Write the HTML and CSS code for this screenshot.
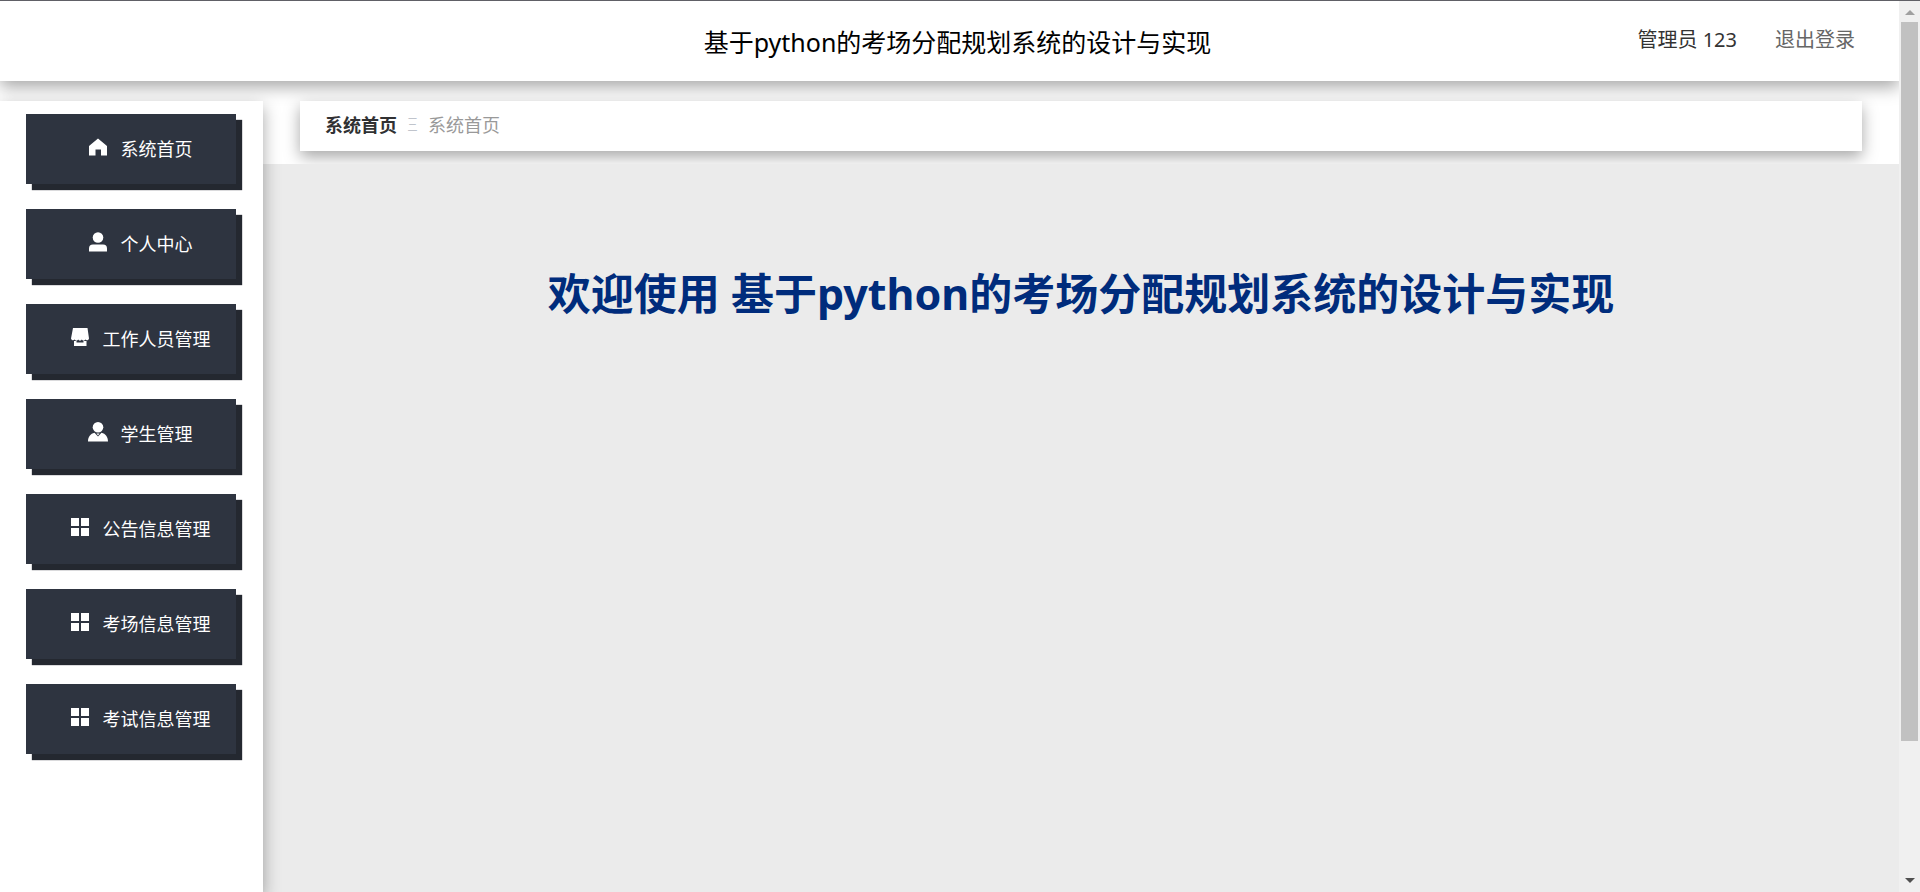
FILE: index.html
```html
<!DOCTYPE html>
<html lang="zh-CN">

<head>
    <meta charset="UTF-8">
    <meta name="viewport" content="width=device-width, initial-scale=1.0">
    <title>基于python的考场分配规划系统的设计与实现</title>
    <link rel="stylesheet" href="styles.css">
</head>

<body>
    <svg class="sprite" aria-hidden="true">
        <symbol id="icon-home" viewBox="0 0 20 20">
            <path d="M10 1.5 19 9V18.5H13V12.500H7.500V18.5H1V9Z"/>
        </symbol>
        <symbol id="icon-user" viewBox="0 0 20 20">
            <circle cx="10" cy="5.5" r="5.3"/>
            <path d="M1 19.5v-3a4 4 0 0 1 4-4h10a4 4 0 0 1 4 4v3z"/>
        </symbol>
        <symbol id="icon-shop" viewBox="0 0 20 20">
            <path d="M3 1h14.5L19 11.5a2 2 0 0 1-3.6 1 2 2 0 0 1-3.6 0 2 2 0 0 1-3.6 0 2 2 0 0 1-3.6 0 2 2 0 0 1-3.6-1z"/>
            <path d="M4 14h2.5v1.5h7V14h3v5H4z"/>
        </symbol>
        <symbol id="icon-custom" viewBox="0 0 20 20">
            <circle cx="10" cy="5.3" r="5.3"/>
            <path d="M0 19.5C0 15 2.5 11.5 6.5 10.8L10 14.5 13.5 10.8C17.5 11.5 20 15 20 19.5z"/>
            <path d="M8.500 11.5h3L10 13.5z"/>
        </symbol>
        <symbol id="icon-menu" viewBox="0 0 20 20">
            <path d="M1 1h8v8H1zM11 1h8v8h-8zM1 11h8v8H1zM11 11h8v8h-8z"/>
        </symbol>
    </svg>

    <div class="app">
        <div class="page">
            <header class="navbar">
                <h1 class="title">基于python的考场分配规划系统的设计与实现</h1>
                <div class="user">
                    <span class="user-name">管理员 123</span>
                    <a class="logout" href="#">退出登录</a>
                </div>
            </header>

            <div class="container">
                <nav class="sidebar">
                    <a class="menu-item" href="#"><svg class="icon"><use href="#icon-home"/></svg>系统首页</a>
                    <a class="menu-item" href="#"><svg class="icon"><use href="#icon-user"/></svg>个人中心</a>
                    <a class="menu-item" href="#"><svg class="icon"><use href="#icon-shop"/></svg>工作人员管理</a>
                    <a class="menu-item" href="#"><svg class="icon"><use href="#icon-custom"/></svg>学生管理</a>
                    <a class="menu-item" href="#"><svg class="icon"><use href="#icon-menu"/></svg>公告信息管理</a>
                    <a class="menu-item" href="#"><svg class="icon"><use href="#icon-menu"/></svg>考场信息管理</a>
                    <a class="menu-item" href="#"><svg class="icon"><use href="#icon-menu"/></svg>考试信息管理</a>
                </nav>

                <main class="main">
                    <div class="breadcrumb">
                        <a class="crumb-home" href="#">系统首页</a>
                        <span class="separator">Ξ</span>
                        <span class="crumb">系统首页</span>
                    </div>
                    <div class="content">
                        <h2 class="welcome">欢迎使用 基于python的考场分配规划系统的设计与实现</h2>
                    </div>
                </main>
            </div>
        </div>

        <div class="scrollbar" aria-hidden="true">
            <span class="arrow arrow-up"></span>
            <div class="track"><div class="thumb"></div></div>
            <span class="arrow arrow-down"></span>
        </div>
    </div>
</body>

</html>
```

FILE: styles.css
```css
* {
    box-sizing: border-box;
}

body {
    margin: 0;
    font-family: "Noto Sans", "Noto Sans CJK SC", sans-serif;
    font-size: 18px;
    color: #303133;
    background: #fff;
}

a {
    color: inherit;
    text-decoration: none;
}

.sprite {
    display: none;
}

.app {
    display: flex;
    height: 100vh;
    border-top: 1px solid #606066;
}

.page {
    flex: 1;
    display: flex;
    flex-direction: column;
    overflow: hidden;
}

/* top bar */
.navbar {
    display: grid;
    grid-template-columns: 1fr auto 1fr;
    align-items: center;
    height: 80px;
    padding: 0 44px 0 60px;
    background: #fff;
    box-shadow: 0 6px 16px rgba(0, 0, 0, 0.35);
}

.title {
    grid-column: 2;
    margin: 0;
    font-size: 25px;
    font-weight: 400;
    color: #000;
}

.user {
    display: flex;
    justify-content: flex-end;
    gap: 38px;
    padding-bottom: 6px;
    font-size: 20px;
    color: #333;
}

.logout {
    color: #666;
}

.container {
    flex: 1;
    display: flex;
    margin-top: 20px;
}

/* side menu */
.sidebar {
    position: relative;
    display: flex;
    flex-direction: column;
    gap: 25px;
    width: 263px;
    padding: 13px 27px 0 26px;
    background: #fff;
    box-shadow: 0 6px 16px rgba(0, 0, 0, 0.35);
}

.menu-item {
    display: flex;
    align-items: center;
    justify-content: center;
    gap: 13px;
    height: 70px;
    padding: 0 0 2px 18px;
    color: #fff;
    background: #2e3440;
    box-shadow: 6px 6px 1px #242830;
}

.icon {
    width: 20px;
    height: 20px;
    margin-bottom: 2px;
    fill: #fff;
}

/* right part */
.main {
    flex: 1;
    display: flex;
    flex-direction: column;
}

.breadcrumb {
    display: flex;
    align-items: center;
    gap: 10px;
    height: 50px;
    margin: 0 37px 13px;
    padding: 0 25px 4px;
    background: #fff;
    box-shadow: 0 6px 16px rgba(0, 0, 0, 0.35);
}

.crumb-home {
    font-weight: 700;
}

.separator {
    color: #c0c4cc;
    font-weight: 300;
}

.crumb {
    color: #999;
}

.content {
    flex: 1;
    padding-top: 100px;
    text-align: center;
    background: #ebebeb;
}

.welcome {
    margin: 0;
    font-size: 43px;
    line-height: 60px;
    color: #002c7c;
}

/* page scrollbar */
.scrollbar {
    display: flex;
    flex-direction: column;
    align-items: center;
    width: 21px;
    background: #f0f0f0;
}

.arrow {
    height: 14px;
    border: 5px solid transparent;
}

.arrow-up {
    margin-bottom: 7px;
    border-top-width: 9px;
    border-bottom-color: #a0a0a0;
}

.arrow-down {
    margin-top: 7px;
    border-bottom-width: 9px;
    border-top-color: #505050;
}

.track {
    flex: 1;
}

.thumb {
    width: 17px;
    height: 84.7%;
    background: #c1c1c1;
}
```
